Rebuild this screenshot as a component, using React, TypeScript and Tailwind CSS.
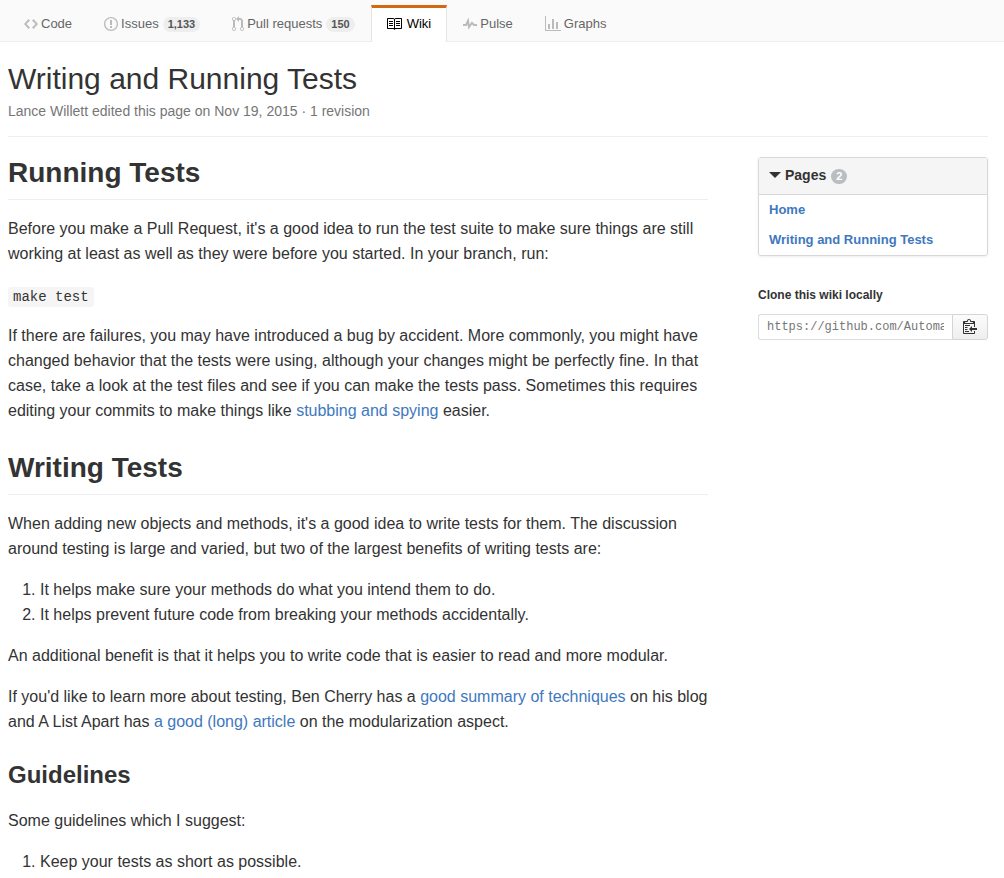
import type { ReactNode } from 'react';

const icons = {
  code: {
    width: 14,
    path: 'M9.5 3L8 4.5 11.5 8 8 11.5 9.5 13 14 8 9.5 3zm-5 0L0 8l4.5 5L6 11.5 2.5 8 6 4.5 4.5 3z',
  },
  issue: {
    width: 14,
    path: 'M7 2.3c3.14 0 5.7 2.56 5.7 5.7s-2.56 5.7-5.7 5.7A5.71 5.71 0 0 1 1.3 8c0-3.14 2.56-5.7 5.7-5.7zM7 1C3.14 1 0 4.14 0 8s3.14 7 7 7 7-3.14 7-7-3.14-7-7-7zm1 3H6v5h2V4zm0 6H6v2h2v-2z',
  },
  pull: {
    width: 12,
    path: 'M11 11.28V5c-.03-.78-.34-1.47-.94-2.06C9.46 2.35 8.78 2.03 8 2H7V0L4 3l3 3V4h1c.27.02.48.11.69.31.21.2.3.42.31.69v6.28A1.993 1.993 0 0 0 10 15a1.993 1.993 0 0 0 1-3.72zm-1 2.92c-.66 0-1.2-.55-1.2-1.2 0-.65.55-1.2 1.2-1.2.65 0 1.2.55 1.2 1.2 0 .65-.55 1.2-1.2 1.2zM4 3c0-1.11-.89-2-2-2a1.993 1.993 0 0 0-1 3.72v6.56A1.993 1.993 0 0 0 2 15a1.993 1.993 0 0 0 1-3.72V4.72c.59-.34 1-.98 1-1.72zm-.8 10c0 .66-.55 1.2-1.2 1.2-.65 0-1.2-.55-1.2-1.2 0-.65.55-1.2 1.2-1.2.65 0 1.2.55 1.2 1.2zM2 4.2C1.34 4.2.8 3.65.8 3c0-.65.55-1.2 1.2-1.2.65 0 1.2.55 1.2 1.2 0 .65-.55 1.2-1.2 1.2z',
  },
  book: {
    width: 16,
    path: 'M2 5h4v1H2V5zm0 3h4V7H2v1zm0 2h4V9H2v1zm11-5H9v1h4V5zm0 2H9v1h4V7zm0 2H9v1h4V9zm2-6v9c0 .55-.45 1-1 1H8.5l-1 1-1-1H1c-.55 0-1-.45-1-1V3c0-.55.45-1 1-1h5.5l1 1 1-1H14c.55 0 1 .45 1 1zm-8 .5L6.5 3H1v9h6V3.5zm7-.5H8.5l-.5.5V12h6V3z',
  },
  pulse: {
    width: 14,
    path: 'M11.5 8L8.8 5.4 6.6 8.5 5.5 1.6 2.38 8H0v2h3.6l.9-1.8.9 5.4L9 8.5l1.6 1.5H14V8h-2.5z',
  },
  graph: {
    width: 16,
    path: 'M16 14v1H0V0h1v14h15zM5 13H3V8h2v5zm4 0H7V3h2v10zm4 0h-2V6h2v7z',
  },
  clippy: {
    width: 14,
    path: 'M2 13h4v1H2v-1zm5-6H2v1h5V7zm2 3V8l-3 3 3 3v-2h5v-2H9zM4.5 9H2v1h2.5V9zM2 12h2.5v-1H2v1zm9 1h1v2c-.02.28-.11.52-.3.7-.19.18-.42.28-.7.3H1c-.55 0-1-.45-1-1V4c0-.55.45-1 1-1h3c0-1.11.89-2 2-2 1.11 0 2 .89 2 2h3c.55 0 1 .45 1 1v5h-1V6H1v9h10v-2zM2 5h8c0-.55-.45-1-1-1H8c-.55 0-1-.45-1-1s-.45-1-1-1-1 .45-1 1-.45 1-1 1H3c-.55 0-1 .45-1 1z',
  },
};

type IconName = keyof typeof icons;

function Icon({ name, className = '' }: { name: IconName; className?: string }) {
  const { width, path } = icons[name];
  return (
    <svg
      aria-hidden="true"
      width={width}
      height={16}
      viewBox={`0 0 ${width} 16`}
      fill="currentColor"
      className={`shrink-0 ${className}`}
    >
      <path d={path} />
    </svg>
  );
}

interface TabProps {
  icon: IconName;
  label: string;
  count?: string;
  active?: boolean;
}

const tabs: TabProps[] = [
  { icon: 'code', label: 'Code' },
  { icon: 'issue', label: 'Issues', count: '1,133' },
  { icon: 'pull', label: 'Pull requests', count: '150' },
  { icon: 'book', label: 'Wiki', active: true },
  { icon: 'pulse', label: 'Pulse' },
  { icon: 'graph', label: 'Graphs' },
];

function Tab({ icon, label, count, active }: TabProps) {
  return (
    <a
      href="#"
      aria-current={active ? 'page' : undefined}
      className={`-mb-px flex h-[37px] items-center border-x border-t-3 px-[15px] pb-[2px] text-[13px] whitespace-nowrap ${
        active
          ? 'border-x-[#e5e5e5] border-t-[#d26911] bg-white text-black'
          : 'border-transparent text-[#666]'
      }`}
    >
      <Icon name={icon} className={active ? 'mr-1 text-black' : 'mr-[3px] text-[#bbb]'} />
      {label}
      {count && (
        <span className="ml-1 rounded-full bg-[#eee] px-[5px] text-[11px] leading-[15px] font-bold text-[#555]">
          {count}
        </span>
      )}
    </a>
  );
}

function Link({ children }: { children: ReactNode }) {
  return (
    <a href="#" className="text-[#4078c0] hover:underline">
      {children}
    </a>
  );
}

function SectionHeading({ children }: { children: ReactNode }) {
  return (
    <h2 className="mt-6 mb-4 border-b border-[#eee] pb-[5px] text-[28px] leading-[42px] font-bold first:mt-0">
      {children}
    </h2>
  );
}

export default function App() {
  return (
    <div className="min-h-screen bg-white font-['Liberation_Sans',Arial,sans-serif] text-[#333]">
      <nav aria-label="Repository" className="flex border-b border-[#eee] bg-[#fafafa] pt-[5px] pl-2">
        {tabs.map((tab) => (
          <Tab key={tab.label} {...tab} />
        ))}
      </nav>

      <main className="pr-4 pb-2 pl-2">
        <header className="mb-[15px] border-b border-[#eee] pt-[19px] pb-[15px]">
          <h1 className="text-[30px] leading-9">Writing and Running Tests</h1>
          <p className="mt-1 text-sm leading-5 text-[#767676]">
            Lance Willett edited this page on Nov 19, 2015 · 1 revision
          </p>
        </header>

        <div className="flex items-start gap-[50px]">
          <article className="min-w-0 flex-1 text-base leading-[25px]">
            <SectionHeading>Running Tests</SectionHeading>
            <p className="mb-4">
              Before you make a Pull Request, it's a good idea to run the test suite to make sure things are
              still working at least as well as they were before you started. In your branch, run:
            </p>
            <p className="mb-4 flex h-[25px] items-end">
              <code className="rounded-[3px] bg-[#f5f5f5] px-[5px] font-['Liberation_Mono',monospace] text-[14px] leading-5">
                make test
              </code>
            </p>
            <p className="mb-4">
              If there are failures, you may have introduced a bug by accident. More commonly, you might have
              changed behavior that the tests were using, although your changes might be perfectly fine. In
              that case, take a look at the test files and see if you can make the tests pass. Sometimes this
              requires editing your commits to make things like <Link>stubbing and spying</Link> easier.
            </p>

            <SectionHeading>Writing Tests</SectionHeading>
            <p className="mb-4">
              When adding new objects and methods, it's a good idea to write tests for them. The discussion
              around testing is large and varied, but two of the largest benefits of writing tests are:
            </p>
            <ol className="mb-4 list-decimal pl-8">
              <li>It helps make sure your methods do what you intend them to do.</li>
              <li>It helps prevent future code from breaking your methods accidentally.</li>
            </ol>
            <p className="mb-4">
              An additional benefit is that it helps you to write code that is easier to read and more
              modular.
            </p>
            <p className="mb-4">
              If you'd like to learn more about testing, Ben Cherry has a{' '}
              <Link>good summary of techniques</Link> on his blog and A List Apart has{' '}
              <Link>a good (long) article</Link> on the modularization aspect.
            </p>

            <h3 className="mt-6 mb-4 text-2xl leading-[34px] font-bold">Guidelines</h3>
            <p className="mb-4">Some guidelines which I suggest:</p>
            <ol className="list-decimal pl-8">
              <li>Keep your tests as short as possible.</li>
            </ol>
          </article>

          <aside className="mt-[5px] w-[230px] shrink-0">
            <section className="rounded-[3px] border border-[#d8d8d8] shadow-[0_1px_3px_rgba(0,0,0,0.075)]">
              <h3 className="border-b border-[#d8d8d8] bg-[#f5f5f5]">
                <button
                  type="button"
                  aria-expanded="true"
                  className="flex h-9 w-full items-center px-[10px] pb-[2px] text-left text-sm font-bold"
                >
                  <svg aria-hidden="true" width="12" height="6" viewBox="0 0 12 6" className="mr-1">
                    <path d="M0 0h12L6 6z" fill="currentColor" />
                  </svg>
                  Pages
                  <span className="mt-[2px] ml-[5px] rounded-full bg-[#babec1] px-[5px] text-[11px] leading-[15px] text-white">
                    2
                  </span>
                </button>
              </h3>
              <ul className="px-[10px] text-[13px] leading-[30px] font-bold">
                <li>
                  <Link>Home</Link>
                </li>
                <li>
                  <Link>Writing and Running Tests</Link>
                </li>
              </ul>
            </section>

            <label htmlFor="clone-url" className="mt-[31px] block text-xs leading-4 font-bold">
              Clone this wiki locally
            </label>
            <div className="mt-[11px] flex h-[26px]">
              <input
                id="clone-url"
                type="text"
                readOnly
                value="https://github.com/Automattic/socket.io.wiki.git"
                className="min-w-0 flex-1 rounded-l-[3px] border border-r-0 border-[#ddd] bg-white px-2 font-['Liberation_Mono',monospace] text-xs text-[#767676]"
              />
              <button
                type="button"
                aria-label="Copy to clipboard"
                className="flex w-9 items-center justify-center rounded-r-[3px] border border-[#d5d5d5] bg-linear-to-b from-[#fcfcfc] to-[#eee] pb-[2px]"
              >
                <Icon name="clippy" />
              </button>
            </div>
          </aside>
        </div>
      </main>
    </div>
  );
}
